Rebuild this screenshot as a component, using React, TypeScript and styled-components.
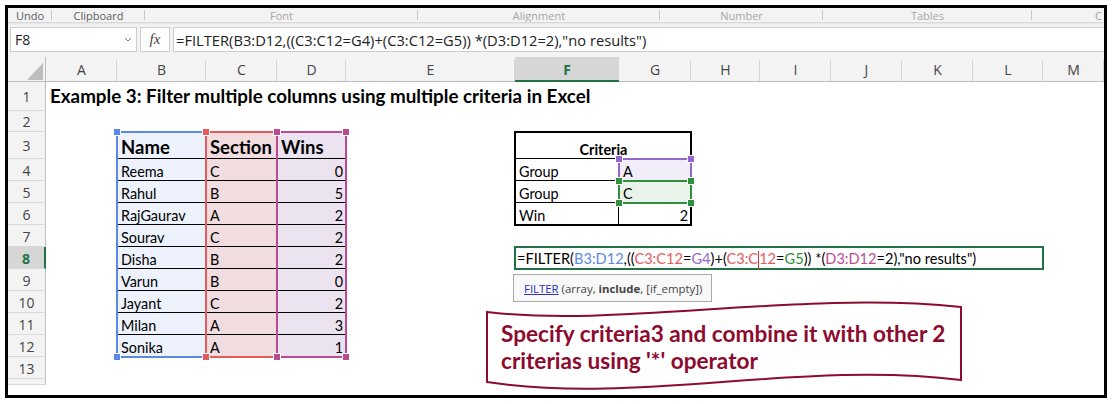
import React from "react";
import styled, { createGlobalStyle } from "styled-components";

const UI = `"Open Sans", "Noto Sans", "DejaVu Sans", sans-serif`;
const CELL = `Lato, "Liberation Sans", sans-serif`;
const GREEN = "#217346";

const GlobalStyle = createGlobalStyle`
  html, body { margin: 0; padding: 0; background: #fff; }
  #root { padding: 5px 0 0 5px; }
  * { box-sizing: border-box; }
`;

const Frame = styled.div`
  width: 1102px;
  height: 393px;
  border: 3px solid #000;
  display: flex;
  flex-direction: column;
  overflow: hidden;
  background: #fff;
`;

const Ribbon = styled.div`
  flex: none;
  height: 15px;
  display: flex;
  background: #f3f3f3;
  border-bottom: 1px solid #d9d9d9;
  box-shadow: 0 1px 2px rgba(0, 0, 0, 0.07);
  font: 11px ${UI};
  overflow: hidden;
  position: relative;
  z-index: 1;
`;

const RibbonGroup = styled.div<{ $w: number; $dim?: boolean; $start?: boolean }>`
  flex: none;
  width: ${(p) => p.$w}px;
  display: flex;
  align-items: center;
  justify-content: ${(p) => (p.$start ? "flex-end" : "center")};
  position: relative;
  white-space: nowrap;
  color: ${(p) => (p.$dim ? "#a6a6a6" : "#5c5c5c")};
  &::after {
    content: "";
    position: absolute;
    right: 0;
    top: 2px;
    bottom: 2px;
    width: 1px;
    background: ${(p) => (p.$start ? "transparent" : "#c8c8c8")};
  }
`;

const FormulaBar = styled.div`
  flex: none;
  height: 34px;
  display: flex;
  gap: 3px;
  padding: 4px 0 5px 2px;
  background: #f3f3f3;
`;

const NameBox = styled.div`
  width: 127px;
  background: #fff;
  border: 1px solid #cdcdcd;
  display: flex;
  align-items: center;
  justify-content: space-between;
  padding: 0 4px 0 4px;
  font: 14px ${UI};
  color: #222;
`;

const FxBox = styled.div`
  width: 30px;
  background: #fff;
  border: 1px solid #cdcdcd;
  display: flex;
  align-items: center;
  justify-content: center;
  font: italic 15px "Liberation Serif", "DejaVu Serif", serif;
  color: #444;
`;

const FormulaInput = styled.div`
  flex: 1;
  background: #fff;
  border: 1px solid #cdcdcd;
  border-right: none;
  display: flex;
  align-items: center;
  padding-left: 2px;
  font: 14.7px ${UI};
  color: #222;
  white-space: nowrap;
  overflow: hidden;
`;

const Sheet = styled.div`
  flex: 1;
  position: relative;
  display: grid;
  grid-template-columns: 38px 71px 89px 71px 69px 169px 104px 72px 69px 71px 71px 71px 70px 1fr;
  grid-template-rows: 25px 29px 21px 27px repeat(10, 22px) 6px;
  align-content: start;
  background: #fff;
  overflow: hidden;
`;

const Corner = styled.div`
  grid-row: 1;
  grid-column: 1;
  background: #f3f3f3;
  border-bottom: 1px solid #bdbdbd;
  border-right: 1px solid #bdbdbd;
  display: flex;
  align-items: flex-end;
  justify-content: flex-end;
  padding: 0 2px 1px 0;
`;

const ColHead = styled.div<{ $c: number; $active?: boolean }>`
  grid-row: 1;
  grid-column: ${(p) => p.$c};
  position: relative;
  display: flex;
  align-items: center;
  justify-content: center;
  font: ${(p) => (p.$active ? 700 : 400)} 14px ${UI};
  color: ${(p) => (p.$active ? GREEN : "#444")};
  background: ${(p) => (p.$active ? "#d6d6d6" : "#f3f3f3")};
  border-bottom: ${(p) => (p.$active ? `2px solid ${GREEN}` : "1px solid #bdbdbd")};
  padding-top: 1px;
  &::after {
    content: "";
    position: absolute;
    right: 0;
    top: 3px;
    bottom: 0;
    width: 1px;
    background: ${(p) => (p.$active ? "transparent" : "#d4d4d4")};
  }
`;

const RowHead = styled.div<{ $r: number; $active?: boolean }>`
  grid-row: ${(p) => p.$r};
  grid-column: 1;
  display: flex;
  align-items: center;
  justify-content: center;
  font: ${(p) => (p.$active ? 700 : 400)} 14px ${UI};
  color: ${(p) => (p.$active ? GREEN : "#444")};
  background: ${(p) => (p.$active ? "#d6d6d6" : "#f3f3f3")};
  border-right: ${(p) => (p.$active ? `2px solid ${GREEN}` : "1px solid #bdbdbd")};
  border-bottom: 1px solid #d9d9d9;
  padding-top: 1px;
`;

type CellProps = {
  $r: number;
  $c: number;
  $cs?: number;
  $bg?: string;
  $align?: "left" | "right" | "center";
  $bold?: boolean;
  $size?: number;
  $bb?: boolean;
  $br?: boolean;
  $pb?: number;
};

const Cell = styled.div<CellProps>`
  grid-row: ${(p) => p.$r};
  grid-column: ${(p) => p.$c} / span ${(p) => p.$cs ?? 1};
  display: flex;
  align-items: flex-end;
  justify-content: ${(p) =>
    p.$align === "right" ? "flex-end" : p.$align === "center" ? "center" : "flex-start"};
  padding: 0 3px ${(p) => p.$pb ?? 0}px 4px;
  font-family: ${CELL};
  font-size: ${(p) => p.$size ?? 14.4}px;
  font-weight: ${(p) => (p.$bold ? 700 : 400)};
  line-height: 1.2;
  color: #000;
  white-space: nowrap;
  background: ${(p) => p.$bg ?? "transparent"};
  border-bottom: ${(p) => (p.$bb ? "1px solid #000" : "none")};
  border-right: ${(p) => (p.$br ? "1px solid #000" : "none")};
`;

const RangeBox = styled.div<{ $r1: number; $r2: number; $c1: number; $c2: number; $color: string; $z?: number }>`
  grid-row: ${(p) => p.$r1} / ${(p) => p.$r2 + 1};
  grid-column: ${(p) => p.$c1} / ${(p) => p.$c2 + 1};
  margin: -1px;
  border: 2px solid ${(p) => p.$color};
  position: relative;
  z-index: ${(p) => p.$z ?? 2};
  pointer-events: none;
`;

const Handle = styled.span<{ $color: string; $v: "top" | "bottom"; $h: "left" | "right" }>`
  position: absolute;
  width: 6px;
  height: 6px;
  background: ${(p) => p.$color};
  box-shadow: 0 0 0 1px #fff;
  ${(p) => p.$v}: -4px;
  ${(p) => p.$h}: -4px;
`;

const CritFrame = styled.div`
  grid-row: 4 / 8;
  grid-column: 7 / 9;
  margin: -1px;
  border: 2px solid #000;
  position: relative;
  z-index: 1;
  pointer-events: none;
`;

const Editor = styled.div`
  grid-row: 9;
  grid-column: 7 / 14;
  margin: -1px;
  border: 2px solid ${GREEN};
  background: #fff;
  position: relative;
  z-index: 3;
  display: flex;
  align-items: center;
  padding: 1px 0 0 1px;
  font: 14.6px ${CELL};
  color: #000;
  white-space: nowrap;
`;

const Ref = styled.span<{ $color: string }>`
  color: ${(p) => p.$color};
`;

const Caret = styled.span`
  display: inline-block;
  width: 1px;
  height: 19px;
  background: #d0343c;
  vertical-align: middle;
  margin: -4px 0 -4px 0;
`;

const Tooltip = styled.div`
  position: absolute;
  left: -3px;
  top: calc(100% + 6px);
  height: 28px;
  display: flex;
  align-items: center;
  padding: 0 9px 0 10px;
  background: #f8f8f8;
  border: 1px solid #a9a9a9;
  font: 11.4px ${UI};
  color: #444;
  white-space: pre;
`;

const FnLink = styled.span`
  color: #2f2fc9;
  text-decoration: underline;
`;

const Callout = styled.div`
  position: absolute;
  left: 477px;
  top: 243px;
  width: 480px;
  height: 92px;
  z-index: 4;
  padding: 20px 0 0 16px;
  font: 700 22.6px ${CELL};
  line-height: 27px;
  color: #8c0b2e;
  white-space: nowrap;
`;

const CalloutShape = styled.svg`
  position: absolute;
  left: 0;
  top: 0;
  z-index: -1;
`;

const CalloutText = styled.div`
  position: relative;
`;

const COLS = ["A", "B", "C", "D", "E", "F", "G", "H", "I", "J", "K", "L", "M"];
const col = (l: string) => COLS.indexOf(l) + 2;
const row = (n: number) => n + 1;

const BLUE = "#5a8ae6";
const RED = "#e75a5c";
const MAG = "#bb4a91";
const PURPLE = "#9466cf";
const GRN = "#2f8f3f";

const FILL_B = "#edf2fc";
const FILL_C = "#f1dcdf";
const FILL_D = "#ece3f0";

const people: [string, string, number][] = [
  ["Reema", "C", 0],
  ["Rahul", "B", 5],
  ["RajGaurav", "A", 2],
  ["Sourav", "C", 2],
  ["Disha", "B", 2],
  ["Varun", "B", 0],
  ["Jayant", "C", 2],
  ["Milan", "A", 3],
  ["Sonika", "A", 1],
];

const ribbonGroups: [string, number, boolean][] = [
  ["Undo", 44, false],
  ["Clipboard", 93, false],
  ["Font", 273, true],
  ["Alignment", 242, true],
  ["Number", 163, true],
  ["Tables", 209, true],
];

const Handles = ({ color, corners }: { color: string; corners: string[] }) => (
  <>
    {corners.map((k) => (
      <Handle
        key={k}
        $color={color}
        $v={k[0] === "t" ? "top" : "bottom"}
        $h={k[1] === "l" ? "left" : "right"}
      />
    ))}
  </>
);

export default function App() {
  return (
    <>
      <GlobalStyle />
      <Frame>
        <Ribbon>
          {ribbonGroups.map(([label, w, dim]) => (
            <RibbonGroup key={label} $w={w} $dim={dim}>
              {label}
            </RibbonGroup>
          ))}
          <RibbonGroup $w={70} $dim $start>
            C
          </RibbonGroup>
        </Ribbon>
        <FormulaBar>
          <NameBox>
            <span>F8</span>
            <svg width="8" height="5" viewBox="0 0 8 5">
              <path d="M1 1l3 3 3-3" stroke="#777" strokeWidth="1" fill="none" />
            </svg>
          </NameBox>
          <FxBox>fx</FxBox>
          <FormulaInput>=FILTER(B3:D12,((C3:C12=G4)+(C3:C12=G5)) *(D3:D12=2),"no results")</FormulaInput>
        </FormulaBar>
        <Sheet>
          <Corner>
            <svg width="16" height="17" viewBox="0 0 16 17">
              <polygon points="16,0 16,17 0,17" fill="#bdbdbd" />
            </svg>
          </Corner>
          {COLS.map((l) => (
            <ColHead key={l} $c={col(l)} $active={l === "F"}>
              {l}
            </ColHead>
          ))}
          {Array.from({ length: 13 }, (_, i) => (
            <RowHead key={i} $r={row(i + 1)} $active={i + 1 === 8}>
              {i + 1}
            </RowHead>
          ))}
          <RowHead $r={15} />

          <Cell $r={row(1)} $c={col("A")} $cs={12} $bold $size={18.8} $pb={3}>
            Example 3: Filter multiple columns using multiple criteria in Excel
          </Cell>

          <Cell $r={row(3)} $c={col("B")} $bg={FILL_B} $bold $size={18.5} $bb>
            Name
          </Cell>
          <Cell $r={row(3)} $c={col("C")} $bg={FILL_C} $bold $size={18.5} $bb>
            Section
          </Cell>
          <Cell $r={row(3)} $c={col("D")} $bg={FILL_D} $bold $size={18.5} $bb>
            Wins
          </Cell>
          {people.map(([name, sec, wins], i) => (
            <React.Fragment key={name}>
              <Cell $r={row(4 + i)} $c={col("B")} $bg={FILL_B} $bb>
                {name}
              </Cell>
              <Cell $r={row(4 + i)} $c={col("C")} $bg={FILL_C} $bb>
                {sec}
              </Cell>
              <Cell $r={row(4 + i)} $c={col("D")} $bg={FILL_D} $bb $align="right">
                {wins}
              </Cell>
            </React.Fragment>
          ))}

          <Cell $r={row(3)} $c={col("F")} $cs={2} $bold $align="center" $bb>
            Criteria
          </Cell>
          <Cell $r={row(4)} $c={col("F")} $bb $br>
            Group
          </Cell>
          <Cell $r={row(4)} $c={col("G")} $bb $bg="#f1edf9">
            A
          </Cell>
          <Cell $r={row(5)} $c={col("F")} $bb $br>
            Group
          </Cell>
          <Cell $r={row(5)} $c={col("G")} $bb $bg="#eaf3ea">
            C
          </Cell>
          <Cell $r={row(6)} $c={col("F")} $br $pb={1}>
            Win
          </Cell>
          <Cell $r={row(6)} $c={col("G")} $align="right" $pb={1}>
            2
          </Cell>
          <CritFrame />

          <RangeBox $r1={row(3)} $r2={row(12)} $c1={col("B")} $c2={col("D")} $color={BLUE}>
            <Handles color={BLUE} corners={["tl", "bl", "tr", "br"]} />
          </RangeBox>
          <RangeBox $r1={row(3)} $r2={row(12)} $c1={col("C")} $c2={col("C")} $color={RED}>
            <Handles color={RED} corners={["tl", "bl", "tr", "br"]} />
          </RangeBox>
          <RangeBox $r1={row(3)} $r2={row(12)} $c1={col("D")} $c2={col("D")} $color={MAG}>
            <Handles color={MAG} corners={["tl", "bl", "tr", "br"]} />
          </RangeBox>
          <RangeBox $r1={row(4)} $r2={row(4)} $c1={col("G")} $c2={col("G")} $color={PURPLE}>
            <Handles color={PURPLE} corners={["tl", "bl", "tr", "br"]} />
          </RangeBox>
          <RangeBox $r1={row(5)} $r2={row(5)} $c1={col("G")} $c2={col("G")} $color={GRN}>
            <Handles color={GRN} corners={["tl", "bl", "tr", "br"]} />
          </RangeBox>

          <Editor>
            <span>
              =FILTER(<Ref $color={BLUE}>B3:D12</Ref>,((<Ref $color={RED}>C3:C12</Ref>=
              <Ref $color={PURPLE}>G4</Ref>)+(<Ref $color={RED}>C3:C</Ref>
              <Caret />
              <Ref $color={RED}>12</Ref>=<Ref $color={GRN}>G5</Ref>)) *(
              <Ref $color={MAG}>D3:D12</Ref>=2),"no results")
            </span>
            <Tooltip>
              <FnLink>FILTER</FnLink>
              {" (array, "}
              <b>include</b>
              {", [if_empty])"}
            </Tooltip>
          </Editor>

          <Callout>
            <CalloutShape width="480" height="92" viewBox="485 300 480 92">
              <path
                d="M487 312 C620 328 800 290 961 307 L961 380 C800 360 640 405 487 382 Z"
                fill="#fff"
                stroke="#8c0b2e"
                strokeWidth="2"
              />
            </CalloutShape>
            <CalloutText>
              Specify criteria3 and combine it with other 2
              <br />
              criterias using '*' operator
            </CalloutText>
          </Callout>
        </Sheet>
      </Frame>
    </>
  );
}
